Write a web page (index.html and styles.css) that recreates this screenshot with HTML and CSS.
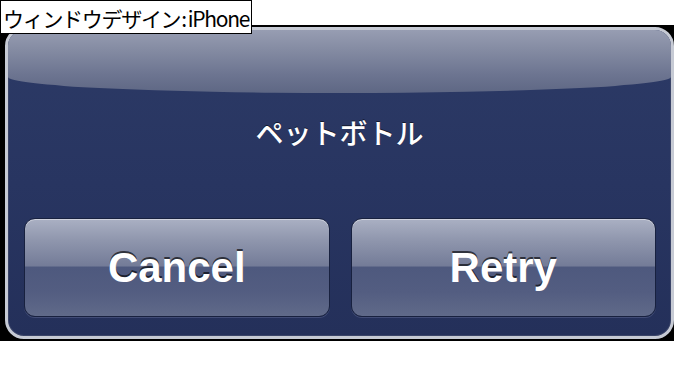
FILE: index.html
```html
<!DOCTYPE html>
<html lang="ja">
<head>
<meta charset="utf-8">
<title>ウィンドウデザイン:iPhone</title>
<link rel="stylesheet" href="styles.css">
</head>
<body>
<div class="label">ウィンドウデザイン<span class="colon">:</span>iPhone</div>
<div class="frame">
  <div class="dialog">
    <div class="title">ペットボトル</div>
    <div class="buttons">
      <div class="btn">Cancel</div>
      <div class="btn">Retry</div>
    </div>
  </div>
</div>
</body>
</html>
```

FILE: styles.css
```css
html, body {
  margin: 0;
  padding: 0;
  background: #ffffff;
}

body {
  width: 680px;
  height: 368px;
  position: relative;
  font-family: "Noto Sans CJK JP", "Noto Sans", sans-serif;
}

.label {
  position: absolute;
  top: 0;
  left: 0;
  z-index: 2;
  box-sizing: border-box;
  width: 252px;
  height: 34px;
  padding: 0 0 0 2px;
  border: 1px solid #000;
  background: #fff;
  color: #000;
  font-size: 21px;
  line-height: 34px;
  white-space: nowrap;
  overflow: hidden;
  letter-spacing: -1.3px;
}

.colon {
  padding: 0 2px 0 1px;
}

.frame {
  margin-top: 25px;
  width: 674px;
  height: 316px;
  box-sizing: border-box;
  padding: 2px 0 2px 5px;
  background: #000;
}

.dialog {
  position: relative;
  height: 100%;
  box-sizing: border-box;
  border: 3px solid #c6cad4;
  border-radius: 19px;
  background: linear-gradient(to bottom, #2c3a66 0%, #283561 50%, #24305a 100%);
  overflow: hidden;
  display: flex;
  flex-direction: column;
  box-shadow: inset 0 0 0 1px #3a4468;
}

.dialog::before {
  content: "";
  position: absolute;
  top: 0;
  left: 0;
  right: 0;
  height: 63px;
  background: linear-gradient(to bottom, #979db2 0%, #858ca3 30%, #6d7591 70%, #5e6784 100%);
  border-radius: 0 0 50% 50% / 0 0 16px 16px;
}

.title {
  position: relative;
  padding-top: 82px;
  text-align: center;
  color: #fff;
  font-size: 28px;
  font-weight: 500;
  line-height: 40px;
  text-shadow: 0 -1px 0 rgba(0, 0, 0, 0.55);
}

.buttons {
  margin-top: auto;
  display: flex;
  gap: 21px;
  padding: 0 15px 19px 16px;
}

.btn {
  flex: 1;
  height: 99px;
  box-sizing: border-box;
  border: 1px solid #18213f;
  border-radius: 11px;
  background: linear-gradient(to bottom, #aab0c3 0%, #8f96ad 22%, #747c98 48%, #4e597e 50%, #535d81 75%, #606a89 100%);
  box-shadow: inset 0 1px 0 rgba(255, 255, 255, 0.45), 0 1px 0 rgba(120, 130, 170, 0.35);
  display: flex;
  align-items: center;
  justify-content: center;
  color: #fff;
  font-family: "Liberation Sans", Arial, sans-serif;
  font-weight: bold;
  font-size: 42px;
  text-shadow: 0 -2px 0 rgba(0, 0, 0, 0.65);
}
```
